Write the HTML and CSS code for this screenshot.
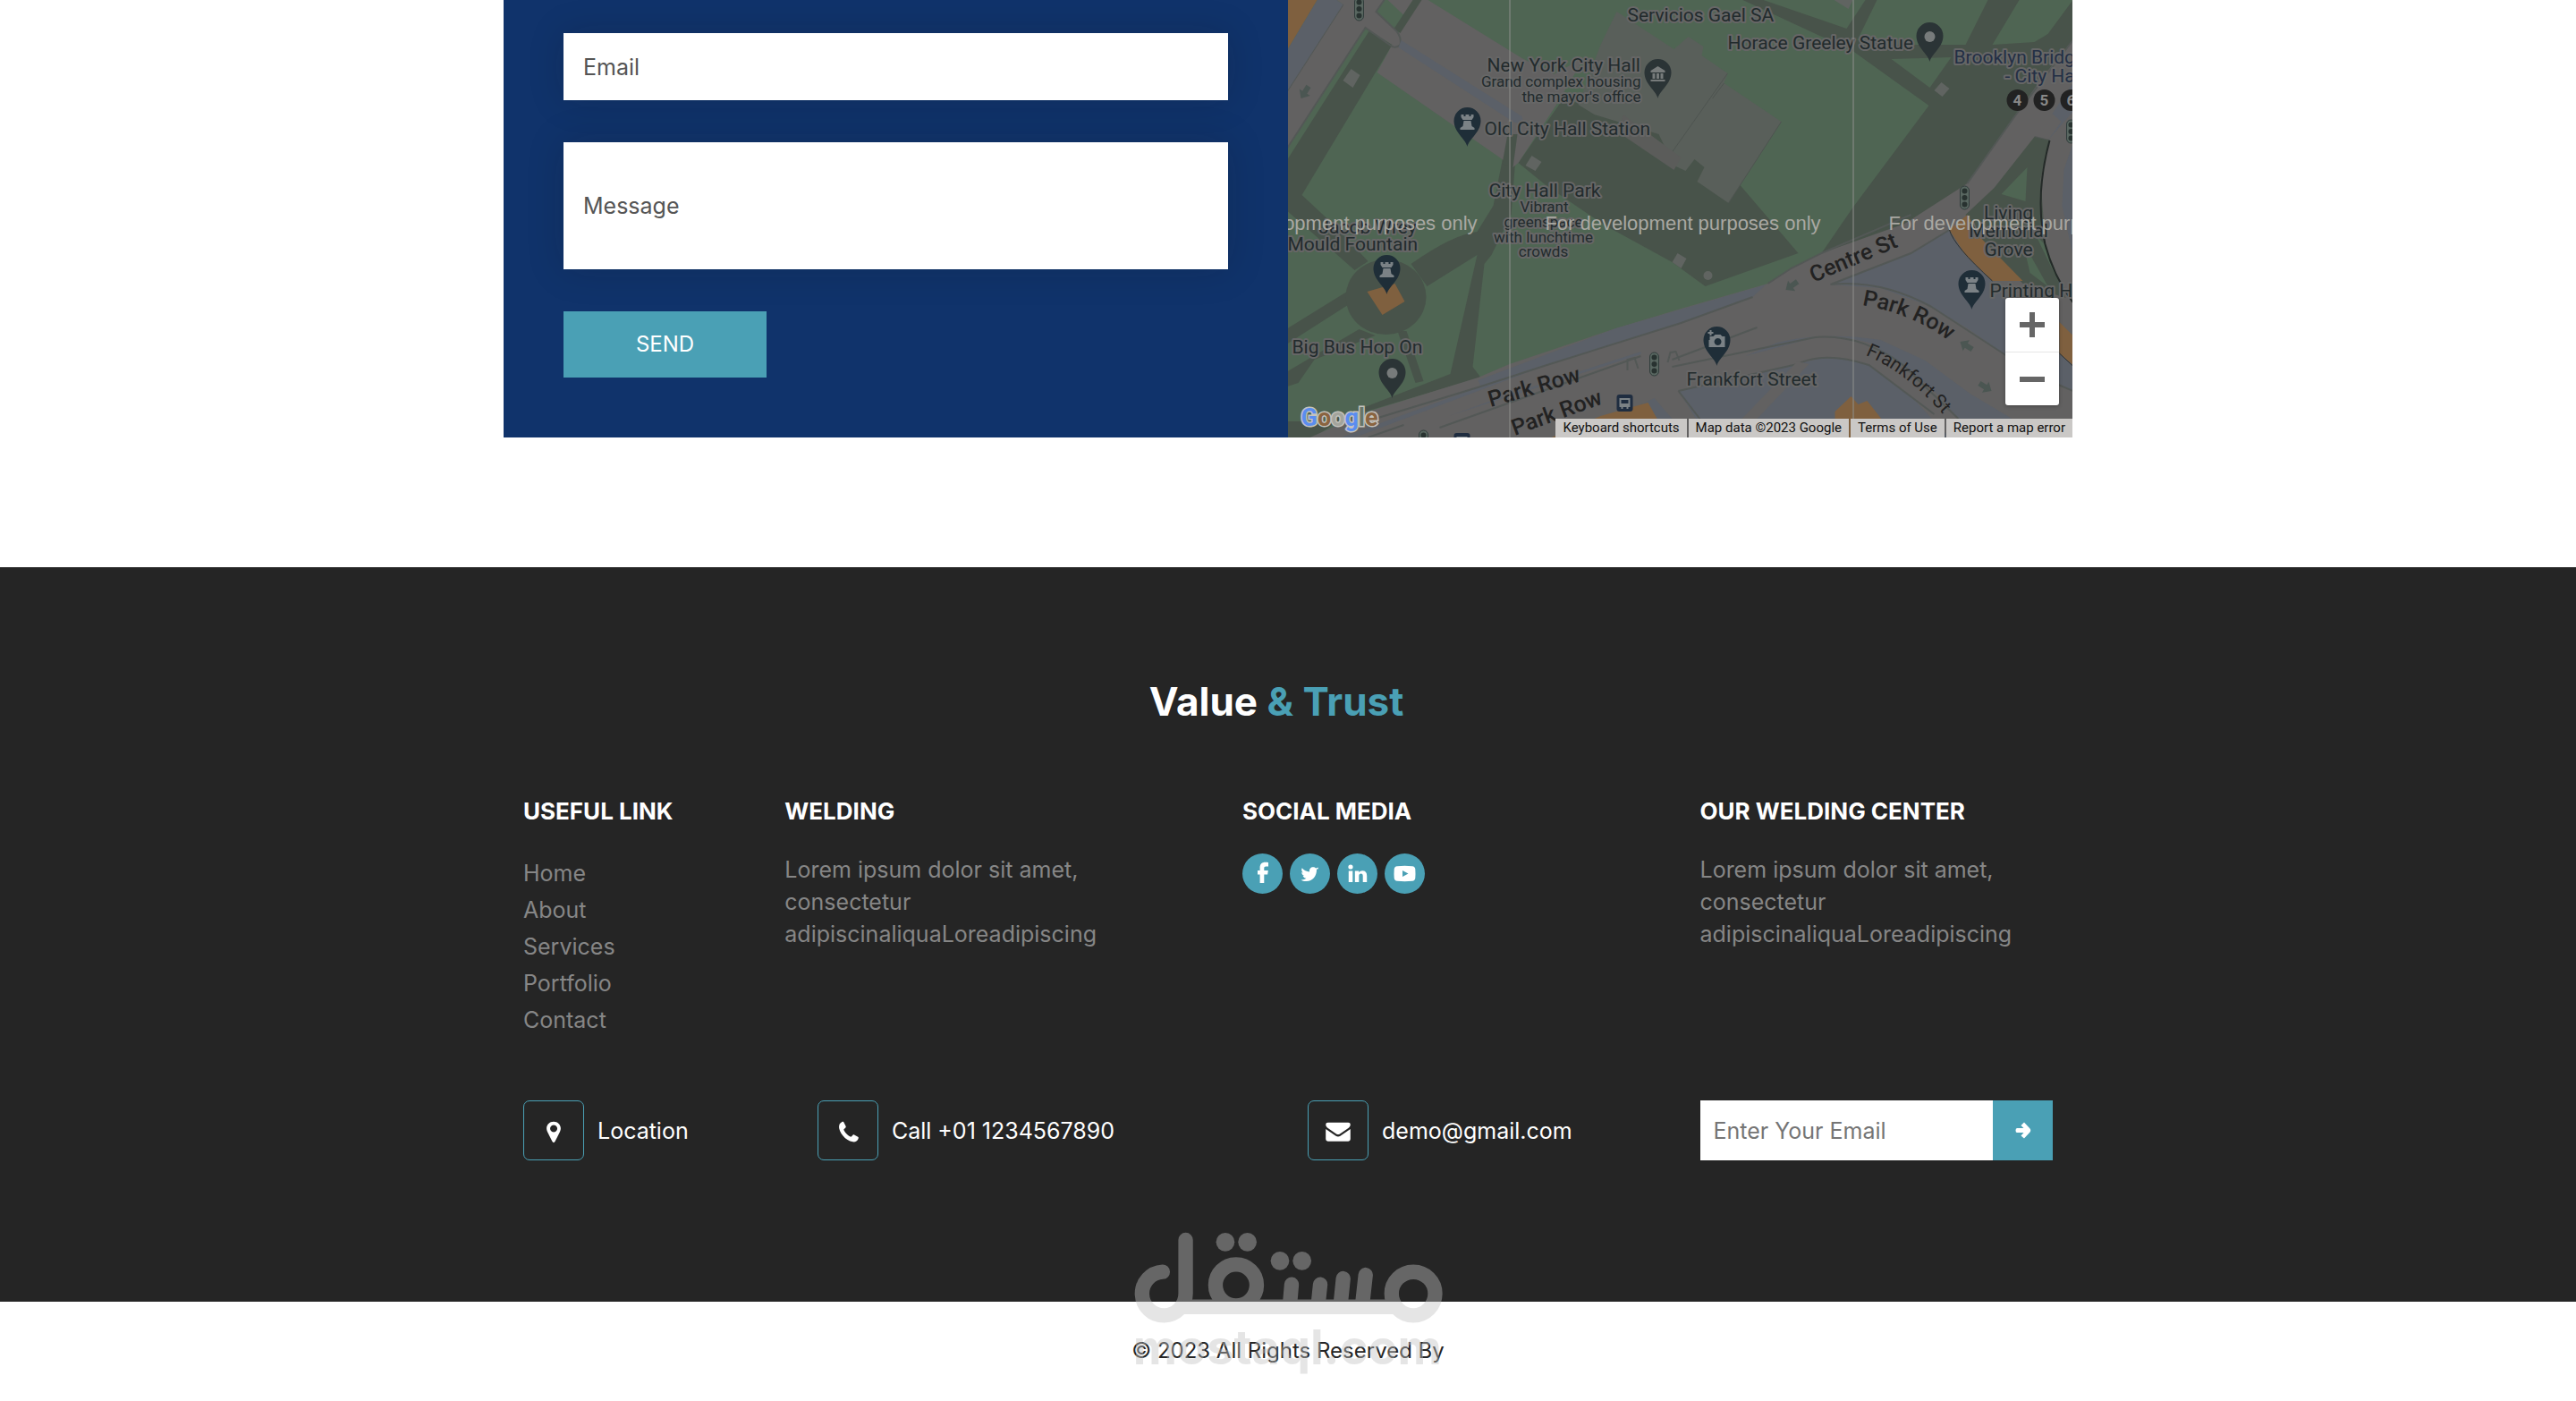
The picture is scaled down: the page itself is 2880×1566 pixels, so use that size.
FILE: index.html
```
<!DOCTYPE html>
<html lang="en">
<head>
<meta charset="utf-8">
<meta name="viewport" content="width=device-width, initial-scale=1">
<title>Value &amp; Trust</title>
<link rel="stylesheet" href="styles.css">
</head>
<body>

<main class="container contact">
  <form class="contact-form">
    <input class="field" type="email" placeholder="Email" aria-label="Email">
    <input class="field field-message" type="text" placeholder="Message" aria-label="Message">
    <button class="send" type="submit">SEND</button>
  </form>

  <section class="map" aria-label="Map">
    <svg class="map-canvas" viewBox="0 0 878 489" preserveAspectRatio="xMidYMin slice">
      <defs>
        <g id="pin"><path d="M0 28C-2 19-15 12-15-1A15 15 0 0 1 15-1C15 12 2 19 0 28Z"/></g>
        <g id="pin-dot"><use href="#pin"/><circle r="6" fill="#777b7b"/></g>
        <g id="pin-rook"><use href="#pin"/><path fill="#7b8286" d="M-7-8h3v2h2v-2h4v2h2v-2h3v3l-2 3H-5l-2-3ZM-4-1H4L5 5 8 7V9H-8V7L-5 5Z"/></g>
        <g id="signal"><rect x="-5" y="-13" width="10" height="26" rx="5" fill="#586660" stroke="#303c3b"/><g fill="#283230"><circle cy="-7.500" r="3"/><circle r="3"/><circle cy="7.500" r="3"/></g></g>
        <g id="bus"><rect x="-9" y="-9" width="18" height="19" rx="3" fill="#1f2d40"/><path fill="#7b8286" d="M-6-5h12v10h-2v2h-2v-2h-4v2h-2v-2h-2ZM-4-3v4h8v-4Z" fill-rule="evenodd"/></g>
        <path id="arrow" d="M0 0 8-7V-3H16V3H8V7Z" fill="#4b5652"/>
        <path id="curve-park" d="M642 341Q697 350 738 380"/>
        <path id="curve-frankfort" d="M646 397Q690 415 732 462"/>
      </defs>

      <rect width="878" height="489" fill="#4f6553"/>

      <g fill="#48534a">
        <path d="M91 35 117 50 16 218 45 245 90 292 75 302 0 236V178Z"/>
        <path d="M0 367 68 325 72 338 0 384ZM80 368 0 415V432L12 428 30 402 98 375ZM123 370H133L152 426 143 428Z"/>
        <ellipse cx="110" cy="332" rx="45" ry="42"/>
        <path d="M138 295Q185 262 212 259L230 230 246 150H257L250 240 228 285 220 295 207 410 216 422 60 468 30 489H0V471H45L182 418 212 285 156 320Z"/>
        <path d="M258 182 305 115 430 110 500 200 571 283 467 320 430 293 355 252 290 208Z"/>
        <path d="M509 0H532L625 32 646 0H659L637 45 675 50H758L783 0H818L788 50 835 47 850 38 878 0V150L700 250 597 283 632 232 717 118 625 52 595 40Z"/>
      </g>
      <path d="M675 66 742 64 718 98Z" fill="#4f6553"/>

      <g fill="#626161">
        <path d="M55 0H157L262 65 298 83 332 64 300 118 258 182 252 187 240 178 100 81 117 50 87 31 0 165V101L62 5Z"/>
        <path d="M25 489 90 460 213 422 248 407 367 367 440 345 537 317 563 300 597 283 690 250 760 205 813 130 845 85 878 45V489Z"/>
      </g>
      <path d="M246 150H257L252 187 240 183Z" fill="#48534a"/>
      <path d="M108 0 99 13 124 37 148 0Z" fill="#4f6553"/>
      <path d="M112 0 130 17 141 0Z" fill="#626161"/>
      <path d="M140 0H150L126 37 119 32Z" fill="#48534a"/>
      <path d="M62 5 0 101M108 0 99 13 119 32Q128 40 126 50Q122 54 117 52L87 31 0 165" fill="none" stroke="#535856" stroke-width="2"/>

      <path d="M368 13 432 55 448 41 465 52 463 62 492 82 488 93 552 136 493 227 458 203 466 187 455 178 445 191 432 185 415 150 343 128 325 117 350 50Z" fill="#595f5a"/>
      <path d="M492 82 430 170M488 93 475 110M552 136 493 227" stroke="#4e5450" fill="none"/>
      <path d="M375 128 440 176 432 190 370 148Z" fill="#5b5c5a"/>
      <g fill="#606461">
        <path d="M71 77 81 84 73 98 62 90ZM273 174 284 181 277 191 266 185ZM731 92 740 99 732 108 723 101ZM436 283 446 289 440 300 430 293ZM611 0H632L627 10Z"/>
        <circle cx="470" cy="308" r="5"/>
      </g>

      <g fill="#5b6068">
        <path d="M33 0H55L62 5 0 101V55Z"/>
        <path d="M127 45 262 130 264 140 252 136 124 53Z"/>
        <path d="M213 425 367 367 535 318 520 332 440 361 290 408 75 489H60L216 432Z"/>
        <path d="M607 318 697 283 740 257 755 280 790 315 878 390V437L803 397 760 367 720 343 663 322Z"/>
        <path d="M512 398 547 383Q600 370 663 380L713 403 763 440 810 468H750L723 437 687 407 650 383Q620 375 590 377Z"/>
        <path d="M437 437 570 407 597 400H620L650 408 697 443 740 489H470Z"/>
        <path d="M878 160 868 190 866 230 878 285ZM878 93 855 127 865 136 850 157 878 125Z"/>
        <path d="M250 440 395 393 395 396 180 465ZM380 460 410 445 430 468H380Z"/>
      </g>
      <g fill="none" stroke="#535856" stroke-width="2">
        <path d="M216 432 75 475M520 332 440 361 290 408 216 432M537 317 563 300 597 283 697 240M607 318 697 283 740 257M607 318Q663 312 720 343L803 397M878 45 813 130 760 205"/>
        <path d="M430 410 590 377Q640 373 687 407L750 468M437 437 570 407Q600 392 650 408L723 463M437 437 470 480M430 402 525 366M170 478 395 398M90 489 130 475"/>
        <path d="M878 437 850 425M835 153 852 157M380 414V402L388 400 392 412M425 405 428 394 434 393 438 403"/>
      </g>
      <path d="M570 404 583 407 525 468H508Z" fill="#626161"/>

      <g fill="#48534a"><path d="M852 157 835 153 790 210 758 240 777 270 823 318 870 333 847 273 842 200Z"/></g>
      <path d="M827 187 798 217 825 225ZM822 270 850 320 830 305ZM836 262 848 275 862 315Z" fill="#4f6553"/>
      <path d="M852 157Q835 220 847 273 856 308 878 338" fill="none" stroke="#242a28" stroke-width="2"/>
      <g fill="#7f603f">
        <path d="M0 0H33L0 55ZM89 326 120 317 131 337 106 352ZM760 240 740 257 758 285 788 314H822L777 268ZM612 460 630 443 638 452 648 448 663 467 675 489H612ZM403 450 350 465 295 489H425ZM863 360 878 375V408L863 395Z"/>
      </g>
      <path d="M740 257Q745 275 788 314M863 395 878 409" stroke="#2e3130" fill="none"/>

      <use href="#arrow" transform="translate(15 110) rotate(-58)"/>
      <use href="#arrow" transform="translate(557 324) rotate(-35)"/>
      <use href="#arrow" transform="translate(752 382) rotate(32)"/>
      <use href="#arrow" transform="translate(787 437) rotate(212)"/>

      <use href="#signal" x="80" y="10"/>
      <use href="#signal" x="757" y="221"/>
      <use href="#signal" x="876" y="147"/>
      <use href="#signal" x="410" y="407"/>
      <use href="#signal" x="152" y="494"/>
      <use href="#bus" x="377" y="450"/>
      <use href="#bus" x="195" y="493"/>

      <g fill="#2b3436">
        <use href="#pin-dot" x="718" y="41"/>
        <use href="#pin-dot" x="117" y="417"/>
        <use href="#pin" x="414" y="82"/>
      </g>
      <path fill="#777b7b" d="M414 74 422 79V81H406V79ZM408 82H411V88H408ZM412.500 82H415.500V88H412.500ZM417 82H420V88H417ZM406 89H422V91H406Z"/>
      <g fill="#1f2e38">
        <use href="#pin-rook" x="201" y="136"/>
        <use href="#pin-rook" x="111" y="301"/>
        <use href="#pin-rook" x="765" y="318"/>
        <use href="#pin" x="480" y="381"/>
      </g>
      <path fill="#7b8286" fill-rule="evenodd" d="M472 376H476L478 374H484L486 376H489V388H471V380H472ZM481 378a4 4 0 1 0 .1 0ZM472 369h2v2h2v2h-2v2h-2v-2h-2v-2h2Z"/>

      <g class="label">
        <text x="380" y="24">Servicios Gael SA</text>
        <text x="492" y="55">Horace Greeley Statue</text>
        <text x="223" y="80">New York City Hall</text>
        <text x="220" y="151">Old City Hall Station</text>
        <text x="225" y="220">City Hall Park</text>
        <text x="35" y="261">Jacob Wrey</text>
        <text x="0" y="280">Mould Fountain</text>
        <text x="5" y="395">Big Bus Hop On</text>
        <text x="446" y="431">Frankfort Street</text>
        <text x="785" y="332">Printing House</text>
        <g text-anchor="middle"><text x="806" y="245">Living</text><text x="806" y="265">Memorial</text><text x="806" y="286">Grove</text></g>
      </g>
      <g class="label transit">
        <text x="745" y="71">Brooklyn Bridge</text>
        <text x="802" y="92">- City Hall</text>
      </g>
      <g class="label small">
        <text x="395" y="97" text-anchor="end">Grand complex housing</text>
        <text x="395" y="114" text-anchor="end">the mayor's office</text>
        <g text-anchor="middle"><text x="287" y="237">Vibrant</text><text x="286" y="254">greenspace</text><text x="286" y="271">with lunchtime</text><text x="286" y="287">crowds</text></g>
      </g>
      <g class="road">
        <text transform="translate(227 455) rotate(-16)">Park Row</text>
        <text transform="translate(254 487) rotate(-20)">Park Row</text>
        <text transform="translate(588 316) rotate(-23)">Centre St</text>
        <text><textPath href="#curve-park">Park Row</textPath></text>
        <text class="minor"><textPath href="#curve-frankfort">Frankfort St</textPath></text>
      </g>
      <g class="line-badge">
        <circle cx="816" cy="112" r="12"/><circle cx="846" cy="112" r="12"/><circle cx="876" cy="112" r="12"/>
        <text x="816" y="118">4</text><text x="846" y="118">5</text><text x="876" y="118">6</text>
      </g>

      <path d="M248.500 0V489M632.500 0V489" stroke="#8f908d"/>
      <g class="notice" text-anchor="middle">
        <text x="58" y="257">For development purposes only</text>
        <text x="442" y="257">For development purposes only</text>
        <text x="826" y="257">For development purposes only</text>
      </g>
      <text class="brand" x="15" y="476"><tspan fill="#5b8def">G</tspan><tspan fill="#8a6440">o</tspan><tspan fill="#a3a49c">o</tspan><tspan fill="#5b8def">g</tspan><tspan fill="#66756a">l</tspan><tspan fill="#8a6440">e</tspan></text>
    </svg>

    <div class="zoom">
      <button type="button" aria-label="Zoom in"><svg viewBox="0 0 28 28"><path d="M11 0h6v11h11v6H17v11h-6V17H0v-6h11Z"/></svg></button>
      <button type="button" aria-label="Zoom out"><svg viewBox="0 0 28 28"><path d="M0 11h28v6H0Z"/></svg></button>
    </div>
    <div class="map-bar">
      <button type="button">Keyboard shortcuts</button>
      <span>Map data ©2023 Google</span>
      <a href="#terms">Terms of Use</a>
      <a href="#report">Report a map error</a>
    </div>
  </section>
</main>

<footer class="footer">
  <div class="container">
    <h2 class="footer-title">Value <span>&amp; Trust</span></h2>

    <div class="columns">
      <section>
        <h3>USEFUL LINK</h3>
        <ul class="links">
          <li><a href="#home">Home</a></li>
          <li><a href="#about">About</a></li>
          <li><a href="#services">Services</a></li>
          <li><a href="#portfolio">Portfolio</a></li>
          <li><a href="#contact">Contact</a></li>
        </ul>
      </section>
      <section>
        <h3>WELDING</h3>
        <p>Lorem ipsum dolor sit amet, consectetur adipiscinaliquaLoreadipiscing</p>
      </section>
      <section>
        <h3>SOCIAL MEDIA</h3>
        <div class="social">
          <a href="#facebook" aria-label="Facebook"><svg viewBox="0 0 45 45"><path d="M29 10v4.500h-2.500c-1.800 0-2.200.8-2.200 2.100v2.400h4.500l-.6 4.500h-3.900V33h-4.700v-9.500H17V19h2.600v-3.300c0-3.800 2.300-5.900 5.900-5.900 1.600 0 3 .1 3.500.2Z"/></svg></a>
          <a href="#twitter" aria-label="Twitter"><svg viewBox="0 0 45 45"><path d="M32 15.800c-.6.900-1.200 1.500-2 2.100.3 7.200-5 13.600-12 13.100-2.200 0-4-.6-5.500-1.600 2.200.2 4.200-.4 5.900-1.600-1.800-.1-3.200-1.200-3.700-2.700h1.700c-2-.5-3.200-2.100-3.200-4 .6.300 1.200.5 1.800.5-1.800-1.300-2.300-3.500-1.300-5.400 2.200 2.600 4.900 4 8.400 4.300-.7-3.200 1.400-5.200 4-5.200 1.300 0 2.300.5 3 1.300 1-.2 1.800-.6 2.700-1-.4 1-1 1.700-1.900 2.300.8-.1 1.500-.4 2.100-.8Z"/></svg></a>
          <a href="#linkedin" aria-label="LinkedIn"><svg viewBox="0 0 45 45"><circle cx="15" cy="15" r="2.600"/><path d="M12.800 19.500h4.500V32h-4.500ZM19.800 19.500h4.500v1.800c.8-1.200 2-2.100 4.100-2.100 3 0 4.800 2 4.800 5.700V32h-4.500v-6.700c0-1.700-.6-2.700-2-2.700-1.600 0-2.400 1.100-2.400 2.700V32h-4.500Z"/></svg></a>
          <a href="#youtube" aria-label="YouTube"><svg viewBox="0 0 45 45"><path fill-rule="evenodd" d="M14 14.200q8.500-.7 17 0 3 .3 3.300 3.300.4 5 0 10-.3 3-3.300 3.300-8.500.7-17 0-3-.3-3.300-3.300-.4-5 0-10 .3-3 3.300-3.300ZM20 19v7l6.500-3.500Z"/></svg></a>
        </div>
      </section>
      <section>
        <h3>OUR WELDING CENTER</h3>
        <p>Lorem ipsum dolor sit amet, consectetur adipiscinaliquaLoreadipiscing</p>
      </section>
    </div>

    <div class="reach">
      <a class="reach-item" href="#location"><span class="reach-icon"><svg viewBox="0 0 67 67"><path fill-rule="evenodd" d="M33.500 23c4.600 0 8 3.400 8 7.800 0 1.600-.4 2.700-1 4l-5.500 11q-1.500 2.200-3 0l-5.500-11c-.6-1.300-1-2.400-1-4 0-4.400 3.400-7.800 8-7.800Zm0 4a4 4 0 1 0 .1 0Z"/></svg></span>Location</a>
      <a class="reach-item" href="tel:+011234567890"><span class="reach-icon"><svg viewBox="0 0 67 67"><path d="M26.500 23.500c1.500-.8 2-.3 2.700 1l1.800 3.600c.5 1.200-.1 1.900-1 2.600-1.600 1.200-1.400 1.700-.7 2.900 1.700 2.800 3.500 4.700 6.300 6.200 1.200.7 1.700.8 2.900-.9.700-.9 1.400-1.300 2.600-.7l3.300 1.900c1.200.7 1.400 1.100.7 2.800-.9 2.300-3.400 3.600-6.200 3.100C31.500 44.800 25 37.500 23.600 31c-.6-3.400.2-6.300 2.900-7.500Z"/></svg></span>Call +01 1234567890</a>
      <a class="reach-item" href="mailto:demo@gmail.com"><span class="reach-icon"><svg viewBox="0 0 67 67"><path d="M19.500 26.500q0-2.500 2.500-2.500h23q2.500 0 2.500 2.500c0 1.800-1.200 3-2.400 4L35.500 37q-2 1.300-4 0L22 30.500c-1.300-1-2.500-2.200-2.500-4ZM19.500 31.500 31 39.300q2.500 1.600 5 0l11.500-7.800V43q0 2.500-2.500 2.500H22q-2.500 0-2.500-2.500Z"/></svg></span>demo@gmail.com</a>
      <form class="newsletter">
        <input type="email" placeholder="Enter Your Email" aria-label="Enter your email">
        <button type="submit" aria-label="Subscribe"><svg viewBox="0 0 67 67"><path d="M33 26.500 35 24.500 41.500 31.500Q43 33.500 41.500 35.500L35 42.500 31.500 39.500 34.500 36H27Q25.500 36 25.500 33.500 25.500 31 27 31H34.500L31.500 28Z"/></svg></button>
      </form>
    </div>
  </div>
</footer>

<div class="copyright">
  <p>© 2023 All Rights Reserved By</p>
  <svg class="watermark" viewBox="80 70 1040 490" role="img" aria-label="mostaql.com">
    <g fill="none" stroke="#c2c2c2" stroke-width="49" stroke-linecap="round">
      <circle cx="1020" cy="283" r="73"/>
      <circle cx="426" cy="254" r="69"/>
      <path d="M180 210A73 73 0 1 0 257 283V103"/>
      <path d="M612 252 607 310M708 252 702 310M785 232 777 310M860 220 850 310"/>
    </g>
    <g fill="#c2c2c2">
      <path d="M236 320 250 302H960L980 340 960 352H245Z"/>
      <circle cx="390" cy="110" r="31"/><circle cx="464" cy="110" r="31"/>
      <circle cx="573" cy="173" r="31"/><circle cx="647" cy="173" r="31"/>
      <text x="598" y="520" text-anchor="middle">mostaql.com</text>
    </g>
  </svg>
</div>

</body>
</html>
```
FILE: styles.css
```
* { box-sizing: border-box; }

body {
  margin: 0;
  background: #fff;
  color: #252525;
  font: 25px/36px Inter, "Open Sans", sans-serif;
}

h2, h3, p, ul { margin: 0; padding: 0; }
a { color: inherit; text-decoration: none; }
button { border: 0; padding: 0; font: inherit; color: inherit; cursor: pointer; }
input { border: 0; border-radius: 0; font: inherit; min-width: 0; }

.container {
  width: 100%;
  max-width: 1754px;
  margin: 0 auto;
}

/* Contact form and map */
.contact {
  display: grid;
  grid-template-columns: 1fr 1fr;
  margin-bottom: 145px;
}

.contact-form {
  display: flex;
  flex-direction: column;
  align-items: flex-start;
  gap: 47px;
  padding: 37px 67px;
  padding-bottom: 67px;
  background: #10336b;
}

.field {
  width: 100%;
  height: 75px;
  padding: 0 22px;
  background: #fff;
  box-shadow: 0 0 40px rgba(20, 20, 20, .16);
}
.field-message { height: 142px; }
.field::placeholder { color: #555; opacity: 1; }

.send {
  width: 227px;
  height: 74px;
  background: #4aa0b5;
  color: #fff;
  font-size: 24px;
}

.map {
  position: relative;
  overflow: hidden;
}
.map-canvas {
  position: absolute;
  width: 100%;
  height: 100%;
  font-family: Roboto, sans-serif;
}
.label {
  font-size: 21px;
  fill: #222b2d;
  stroke: #666;
  stroke-width: 4px;
  stroke-linejoin: round;
  paint-order: stroke;
}
.transit { fill: #232f45; }
.small { font-size: 17px; }
.road { font-size: 25px; font-weight: 500; fill: #222; }
.minor { font-size: 21px; font-weight: 400; }
.line-badge { fill: #222; font-size: 17px; font-weight: 700; text-anchor: middle; }
.line-badge text { fill: #888; }
.notice { font: 22px "Liberation Sans", sans-serif; fill: #a9a8a2; }
.brand {
  font-size: 27px;
  font-weight: 700;
  stroke: #c4c3be;
  stroke-width: 3px;
  paint-order: stroke;
}

.zoom {
  position: absolute;
  right: 15px;
  bottom: 36px;
  width: 60px;
  border-radius: 3px;
  background: #fff;
  box-shadow: 0 1px 4px rgba(0, 0, 0, .3);
}
.zoom button {
  display: grid;
  place-items: center;
  width: 100%;
  height: 60px;
  background: none;
}
.zoom button + button { border-top: 1px solid #e6e6e6; }
.zoom svg { width: 28px; fill: #666; }

.map-bar {
  position: absolute;
  right: 0;
  bottom: 0;
  display: flex;
  gap: 2px;
  font: 15px/21px Roboto, sans-serif;
  color: #111;
  white-space: nowrap;
}
.map-bar > * { padding: 0 8px; background: #cac8c6; }

/* Footer */
.footer {
  padding: 120px 0 158px;
  background: #252525;
  color: #fff;
}
.footer-title {
  padding-right: 26px;
  font-size: 44px;
  line-height: 60px;
  font-weight: 700;
  text-align: center;
}
.footer-title span { color: #4aa0b5; }

.columns {
  display: grid;
  grid-template-columns: 4fr 7fr 7fr 6fr;
  margin-top: 77px;
}
.columns > section { padding: 0 22px; }
.columns h3 {
  margin-bottom: 31px;
  font-size: 26px;
  line-height: 32px;
  font-weight: 700;
  white-space: nowrap;
}
.columns p {
  max-width: 380px;
  color: #868686;
}
.links {
  padding-top: 2px;
  list-style: none;
  line-height: 41px;
  color: #868686;
}
.social { display: flex; gap: 8px; }
.social a {
  width: 45px;
  height: 45px;
  border-radius: 50%;
  background: #4aa0b5;
}
.social svg { display: block; fill: #fff; }

.reach {
  display: grid;
  grid-template-columns: 3fr 5fr 4fr 4fr;
  margin-top: 69px;
}
.reach > * { min-width: 0; }
.reach-item {
  display: flex;
  align-items: center;
  gap: 15px;
  padding-left: 22px;
}
.reach-icon {
  width: 68px;
  height: 67px;
  border: 1px solid #4aa0b5;
  border-radius: 7px;
}
.reach-icon svg { display: block; fill: #fff; }

.newsletter { display: flex; padding: 0 22px; }
.newsletter input { flex: 1; height: 67px; padding: 0 15px; background: #fff; }
.newsletter input::placeholder { color: #757575; opacity: 1; }
.newsletter button { width: 67px; background: #4aa0b5; }
.newsletter svg { display: block; fill: #fff; }

.copyright {
  position: relative;
  padding: 37px 0 38px;
  font-size: 24px;
  text-align: center;
}
.watermark {
  position: absolute;
  left: 50%;
  bottom: 28px;
  width: 347px;
  transform: translateX(-50%);
  opacity: .41;
}
.watermark text { font-size: 162px; font-weight: 700; }
```
